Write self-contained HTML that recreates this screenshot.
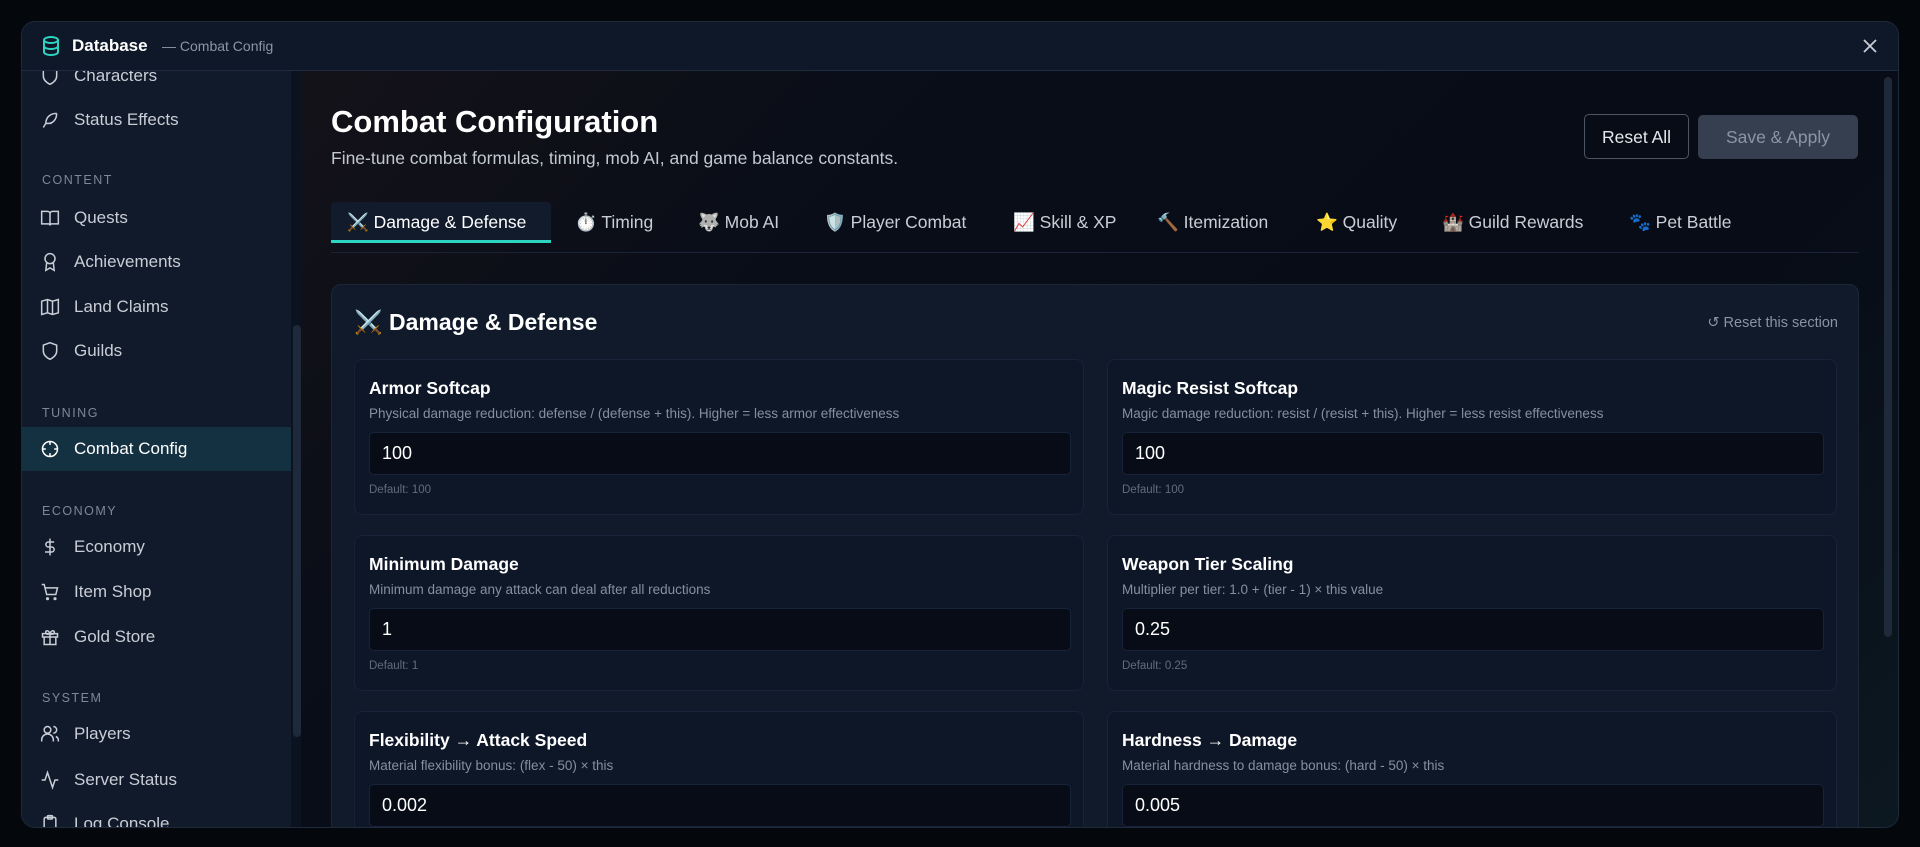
<!DOCTYPE html>
<html><head><meta charset="utf-8">
<style>
*{box-sizing:border-box;margin:0;padding:0}
body{width:1920px;height:847px;overflow:hidden;background:#04070b;font-family:"Liberation Sans","DejaVu Sans",sans-serif;color:#e5e7eb;position:relative}
.modal{position:absolute;left:21px;top:21px;width:1878px;height:807px;border-radius:14px;background:#0f1828;border:1px solid #1f2a3b;overflow:hidden}
.hdr{position:absolute;left:0;top:0;right:0;height:49px;border-bottom:1px solid #1f2b3e;background:#0f1828}
.hdr .t{position:absolute;left:50px;top:14px;font-size:17px;font-weight:bold;color:#fff}
.hdr .s{position:absolute;left:140px;top:16px;font-size:14px;color:#8b95a5}
.side{position:absolute;left:0;top:49px;width:269px;bottom:0;background:#111a2b;overflow:hidden}
.sb{position:absolute;left:269px;top:49px;width:10px;bottom:0;background:#0c1320}
.sb i{position:absolute;left:2px;top:254px;width:8px;height:412px;border-radius:4px;background:#1e2a3c}
.item{position:absolute;left:0;width:269px;height:44px;font-size:17px;color:#c9ced6;padding-left:52px;line-height:44px}
.item svg{position:absolute;left:18px;top:12px}
.item.act{background:#133140;color:#fff}
.cat{position:absolute;left:20px;font-size:12.5px;letter-spacing:1.5px;color:#7d8796}
.main{position:absolute;left:279px;top:49px;right:0;bottom:0;overflow:hidden;background:linear-gradient(135deg,#141219 0%,#080d18 30%,#070c16 70%,#0c1820 100%)}
.in2{position:absolute;left:-22px;top:-22px;width:1700px;height:900px}
.vs{position:absolute;right:6px;top:6px;width:8px;height:560px;border-radius:4px;background:#1e2a3a}
h1{position:absolute;left:52px;top:55px;font-size:31px;font-weight:bold;color:#fff}
.sub{position:absolute;left:52px;top:99px;font-size:17.5px;color:#c2c8d1}
.btn{position:absolute;top:65px;height:45px;border-radius:5px;font-size:17.5px;line-height:45px;text-align:center}
.tabs{position:absolute;left:52px;top:153px;width:1528px;height:51px;border-bottom:1px solid #1a2436}
.tab{position:absolute;top:0;height:41px;line-height:41px;font-size:17.5px;color:#c9ced6;white-space:nowrap}
.tab.act{background:#111b2b;border-bottom:3px solid #2dd4bf;color:#fff;padding:0 16px;border-radius:4px 4px 0 0}
.card{position:absolute;left:52px;top:235px;width:1528px;height:600px;border-radius:10px;background:#101a2b;border:1px solid #1b2739}
.card h2{position:absolute;left:22px;top:24px;font-size:23px;font-weight:bold;color:#fff}
.rs{position:absolute;right:20px;top:30px;font-size:14.5px;color:#8a93a2}
.f{position:absolute;width:730px;height:156px;border-radius:8px;background:#0e1727;border:1px solid #18233a}
.f b{position:absolute;left:14px;top:18px;font-size:17.5px;color:#fff}
.f p{position:absolute;left:14px;top:46px;font-size:13.5px;color:#858f9e}
.f .in{position:absolute;left:14px;top:72px;width:702px;height:43px;border-radius:5px;background:#070c16;border:1px solid #18223a;font-size:18px;color:#fff;padding-left:12px;line-height:41px}
.f small{position:absolute;left:14px;top:124px;font-size:11.5px;color:#626b7a}
</style></head><body>
<div class="modal">
 <div class="hdr">
  <svg style="position:absolute;left:20px;top:14px" width="18" height="20" viewBox="0 0 18 20" fill="none" stroke="#2dd4bf" stroke-width="2"><ellipse cx="9" cy="4" rx="7" ry="3"/><path d="M2 4v12c0 1.7 3 3 7 3s7-1.3 7-3V4M2 10c0 1.7 3 3 7 3s7-1.3 7-3"/></svg>
  <div class="t">Database</div><div class="s">— Combat Config</div>
  <svg style="position:absolute;right:20px;top:16px" width="16" height="16" viewBox="0 0 16 16" stroke="#c9ced6" stroke-width="1.8"><path d="M2 2l12 12M14 2L2 14"/></svg>
 </div>
 <div class="side">
  <div class="item" style="top:-17px"><svg width="20" height="20" viewBox="0 0 24 24" fill="none" stroke="#c9ced6" stroke-width="1.8"><path d="M12 2l8 3v7c0 5-4 8-8 10-4-2-8-5-8-10V5z"/></svg>Characters</div>
  <div class="item" style="top:27px"><svg width="20" height="20" viewBox="0 0 24 24" fill="none" stroke="#c9ced6" stroke-width="1.8"><path d="M20 4c-8 0-13 5-13 12l-3 5M7 16h7M20 4c0 8-5 13-13 12"/></svg>Status Effects</div>
  <div class="cat" style="top:102px">CONTENT</div>
  <div class="item" style="top:125px"><svg width="20" height="20" viewBox="0 0 24 24" fill="none" stroke="#c9ced6" stroke-width="1.8"><path d="M2 4h7a3 3 0 013 3v14a2 2 0 00-2-2H2zM22 4h-7a3 3 0 00-3 3v14a2 2 0 012-2h8z"/></svg>Quests</div>
  <div class="item" style="top:169px"><svg width="20" height="20" viewBox="0 0 24 24" fill="none" stroke="#c9ced6" stroke-width="1.8"><circle cx="12" cy="8" r="6"/><path d="M8 13l-1 9 5-3 5 3-1-9"/></svg>Achievements</div>
  <div class="item" style="top:214px"><svg width="20" height="20" viewBox="0 0 24 24" fill="none" stroke="#c9ced6" stroke-width="1.8"><path d="M2 5l7-2 6 2 7-2v16l-7 2-6-2-7 2zM9 3v16M15 5v16"/></svg>Land Claims</div>
  <div class="item" style="top:258px"><svg width="20" height="20" viewBox="0 0 24 24" fill="none" stroke="#c9ced6" stroke-width="1.8"><path d="M12 2l8 3v7c0 5-4 8-8 10-4-2-8-5-8-10V5z"/></svg>Guilds</div>
  <div class="cat" style="top:335px">TUNING</div>
  <div class="item act" style="top:356px"><svg width="20" height="20" viewBox="0 0 24 24" fill="none" stroke="#fff" stroke-width="1.8"><circle cx="12" cy="12" r="9"/><path d="M12 3v4M12 17v4M3 12h4M17 12h4"/></svg>Combat Config</div>
  <div class="cat" style="top:433px">ECONOMY</div>
  <div class="item" style="top:454px"><svg width="20" height="20" viewBox="0 0 24 24" fill="none" stroke="#c9ced6" stroke-width="1.8"><path d="M12 2v20M17 6H10a3 3 0 000 6h4a3 3 0 010 6H6"/></svg>Economy</div>
  <div class="item" style="top:499px"><svg width="20" height="20" viewBox="0 0 24 24" fill="none" stroke="#c9ced6" stroke-width="1.8"><path d="M2 3h3l3 12h11l2-8H6"/><circle cx="9" cy="20" r="1"/><circle cx="18" cy="20" r="1"/></svg>Item Shop</div>
  <div class="item" style="top:544px"><svg width="20" height="20" viewBox="0 0 24 24" fill="none" stroke="#c9ced6" stroke-width="1.8"><path d="M3 8h18v4H3zM5 12v9h14v-9M12 8v13M12 8c-2-5-6-4-5-1s5 1 5 1c2-5 6-4 5-1s-5 1-5 1"/></svg>Gold Store</div>
  <div class="cat" style="top:620px">SYSTEM</div>
  <div class="item" style="top:641px"><svg width="20" height="20" viewBox="0 0 24 24" fill="none" stroke="#c9ced6" stroke-width="1.8"><circle cx="9" cy="7" r="4"/><path d="M2 21v-2a5 5 0 0114 0v2M16 3a4 4 0 010 8M22 21v-2a5 5 0 00-3-4"/></svg>Players</div>
  <div class="item" style="top:687px"><svg width="20" height="20" viewBox="0 0 24 24" fill="none" stroke="#c9ced6" stroke-width="1.8"><path d="M22 12h-4l-3 9L9 3l-3 9H2"/></svg>Server Status</div>
  <div class="item" style="top:731px"><svg width="20" height="20" viewBox="0 0 24 24" fill="none" stroke="#c9ced6" stroke-width="1.8"><rect x="5" y="4" width="14" height="18" rx="2"/><rect x="9" y="2" width="6" height="4" rx="1"/></svg>Log Console</div>
 </div>
 <div class="sb"><i></i></div>
 <div class="main">
  <div class="in2">
  <h1>Combat Configuration</h1>
  <div class="sub">Fine-tune combat formulas, timing, mob AI, and game balance constants.</div>
  <div class="btn" style="left:1305px;width:105px;border:1px solid #4b5563;color:#e5e7eb">Reset All</div>
  <div class="btn" style="left:1419px;width:160px;background:#353f4f;color:#8b95a5;top:66px;height:44px">Save &amp; Apply</div>
  <div class="tabs">
   <div class="tab act" style="left:0;width:220px">⚔️ Damage &amp; Defense</div>
   <div class="tab" style="left:244px">⏱️ Timing</div>
   <div class="tab" style="left:367px">🐺 Mob AI</div>
   <div class="tab" style="left:493px">🛡️ Player Combat</div>
   <div class="tab" style="left:682px">📈 Skill &amp; XP</div>
   <div class="tab" style="left:826px">🔨 Itemization</div>
   <div class="tab" style="left:985px">⭐ Quality</div>
   <div class="tab" style="left:1111px">🏰 Guild Rewards</div>
   <div class="tab" style="left:1298px">🐾 Pet Battle</div>
  </div>
  <div class="card">
   <h2>⚔️ Damage &amp; Defense</h2>
   <div class="rs">↺ Reset this section</div>
   <div class="f" style="left:22px;top:74px"><b>Armor Softcap</b><p>Physical damage reduction: defense / (defense + this). Higher = less armor effectiveness</p><div class="in">100</div><small>Default: 100</small></div>
   <div class="f" style="left:775px;top:74px"><b>Magic Resist Softcap</b><p>Magic damage reduction: resist / (resist + this). Higher = less resist effectiveness</p><div class="in">100</div><small>Default: 100</small></div>
   <div class="f" style="left:22px;top:250px"><b>Minimum Damage</b><p>Minimum damage any attack can deal after all reductions</p><div class="in">1</div><small>Default: 1</small></div>
   <div class="f" style="left:775px;top:250px"><b>Weapon Tier Scaling</b><p>Multiplier per tier: 1.0 + (tier - 1) × this value</p><div class="in">0.25</div><small>Default: 0.25</small></div>
   <div class="f" style="left:22px;top:426px"><b>Flexibility → Attack Speed</b><p>Material flexibility bonus: (flex - 50) × this</p><div class="in">0.002</div></div>
   <div class="f" style="left:775px;top:426px"><b>Hardness → Damage</b><p>Material hardness to damage bonus: (hard - 50) × this</p><div class="in">0.005</div></div>
  </div>
  </div>
  <div class="vs"></div>
 </div>
</div>
</body></html>
